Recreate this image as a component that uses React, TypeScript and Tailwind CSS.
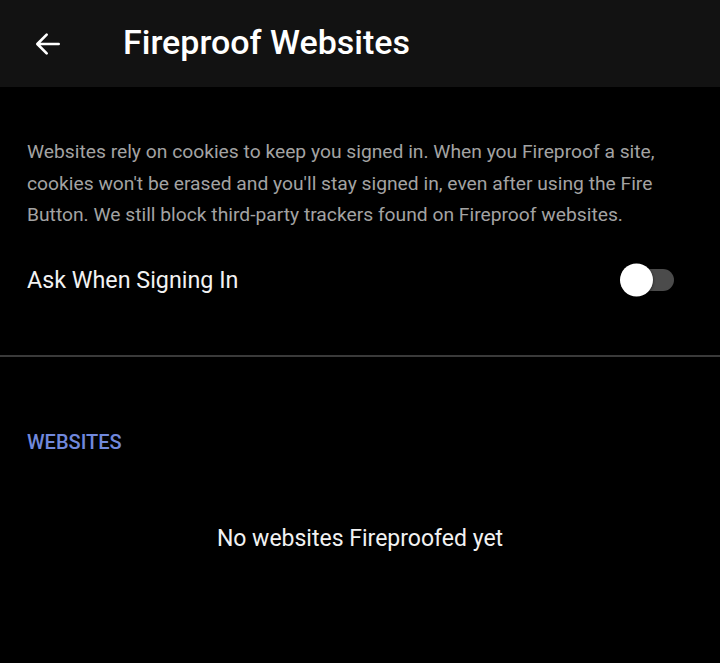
export default function App() {
  return (
    <div className="w-[720px] h-[663px] bg-black flex flex-col" style={{ fontFamily: 'Roboto, "Noto Sans", sans-serif' }}>
      <div className="h-[87px] bg-[#121212] flex items-center shrink-0">
        <div className="w-[32px] h-[32px] ml-[32px] flex items-center justify-center">
          <svg width="32" height="32" viewBox="0 0 24 24" fill="none">
            <path d="M20 12H4.5M11 5l-7 7 7 7" stroke="#ffffff" strokeWidth="2" strokeLinecap="round" strokeLinejoin="round" />
          </svg>
        </div>
        <div className="ml-[59px] text-[34px] font-medium text-white leading-none -mt-[4px]">Fireproof Websites</div>
      </div>
      <div className="px-[27px] pt-[49px]">
        <p className="text-[19.25px] leading-[31.5px] text-[#a3a3a3]">
          Websites rely on cookies to keep you signed in. When you Fireproof a site, cookies won't be erased and you'll stay signed in, even after using the Fire Button. We still block third-party trackers found on Fireproof websites.
        </p>
        <div className="flex items-center justify-between mt-[32px] pr-[19px]">
          <span className="text-[23.3px] text-[#f2f2f2]">Ask When Signing In</span>
          <div className="relative w-[44px] h-[22px] rounded-full bg-[#4b4b4b]">
            <div className="absolute left-[-10px] top-1/2 -translate-y-1/2 w-[33px] h-[33px] rounded-full bg-white shadow-[0_1px_3px_rgba(0,0,0,0.6)]" />
          </div>
        </div>
      </div>
      <div className="mt-[58px] h-[2px] bg-[#3a3a3a]" />
      <div className="px-[27px] pt-[70px]">
        <div className="text-[20px] font-medium text-[#7088dc]">WEBSITES</div>
      </div>
      <div className="mt-[65px] text-center text-[23px] text-[#f2f2f2]">No websites Fireproofed yet</div>
    </div>
  );
}
